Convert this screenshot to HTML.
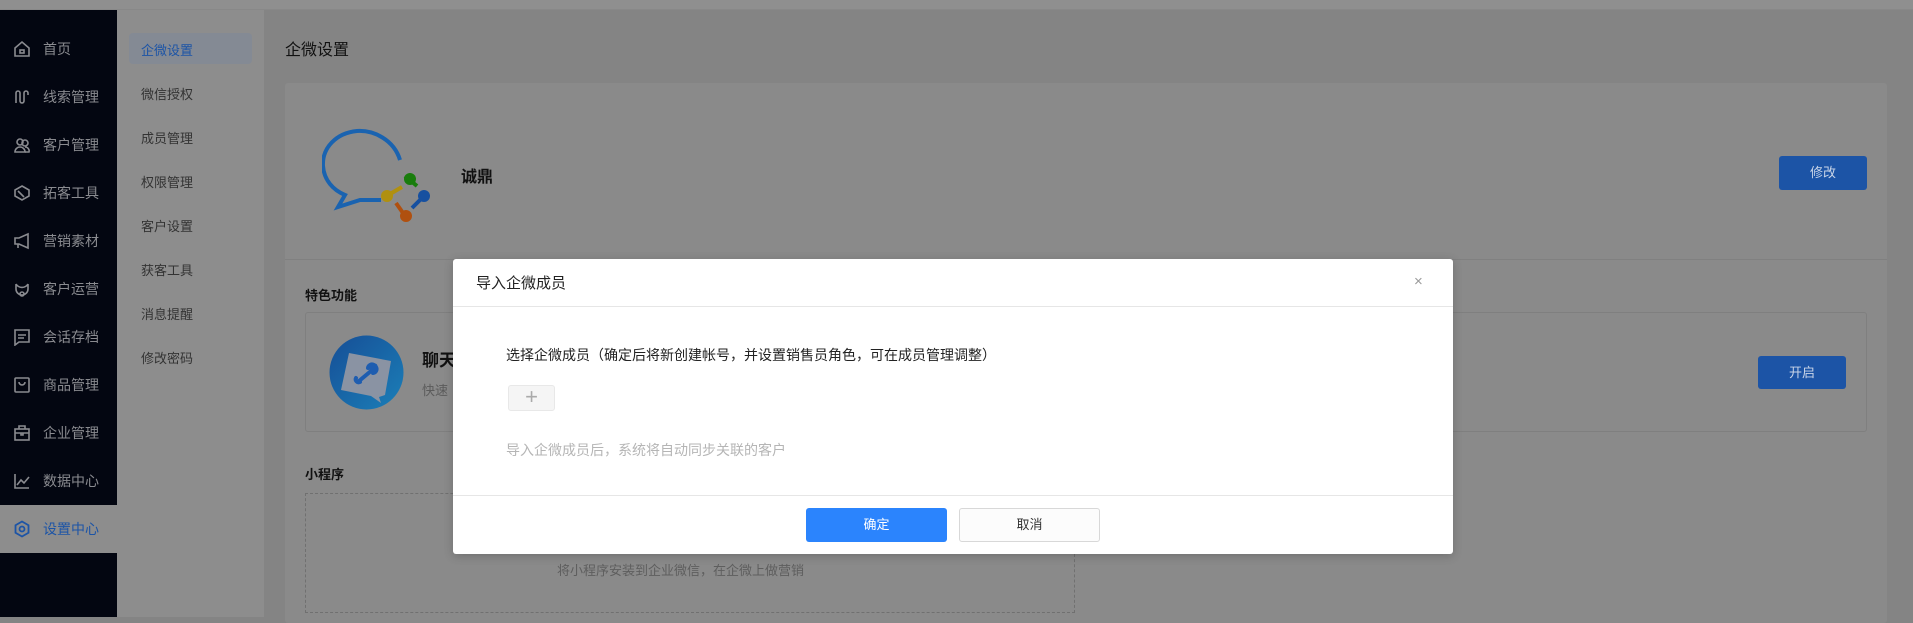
<!DOCTYPE html>
<html><head><meta charset="utf-8"><style>
*{margin:0;padding:0;box-sizing:border-box}
body{width:1913px;height:617px;overflow:hidden;background:#848484;font-family:"Liberation Sans","Noto Sans CJK SC",sans-serif;position:relative}
.a{position:absolute;white-space:nowrap}
.top{left:0;top:0;width:1913px;height:10px;background:#8f8f8f;border-bottom:1px solid #888}
.side{left:0;top:10px;width:117px;height:607px;background:#030611}
.nav{left:0;width:117px;height:48px;color:#8a8b90;font-size:14px;line-height:48px;padding-left:43px}
.nav svg{position:absolute;left:13px;top:15px}
.sub{left:117px;top:10px;width:147px;height:607px;background:#8d8d8d}
.si{left:141px;font-size:13px;color:#333}
.card{background:#8a8a8a;border-radius:3px}
.btn{background:#1c54a6;color:#c9d5e8;font-size:13px;text-align:center;border-radius:3px}
</style></head><body>
<div class="a top"></div>
<div class="a side"></div>
<div class="a" style="left:0;top:505px;width:117px;height:48px;background:#8d8d8d"></div>
<div class="a nav" style="top:25px"><svg width="18" height="18" viewBox="0 0 18 18" fill="none" stroke="#8a8b90" stroke-width="1.6"><path d="M2 8L9 2l7 6v8H2z"/><rect x="7" y="10" width="4" height="3"/></svg>首页</div>
<div class="a nav" style="top:73px"><svg width="18" height="18" viewBox="0 0 18 18" fill="none" stroke="#8a8b90" stroke-width="1.6"><path d="M3 15V5a2 2 0 014 0v8a2 2 0 004 0V5a2 2 0 014 0v2"/></svg>线索管理</div>
<div class="a nav" style="top:121px"><svg width="18" height="18" viewBox="0 0 18 18" fill="none" stroke="#8a8b90" stroke-width="1.6"><circle cx="7" cy="6" r="3"/><path d="M2 16a5 5 0 0110 0z"/><circle cx="12" cy="7" r="3"/><path d="M12 16h4a4 4 0 00-4-5"/></svg>客户管理</div>
<div class="a nav" style="top:169px"><svg width="18" height="18" viewBox="0 0 18 18" fill="none" stroke="#8a8b90" stroke-width="1.6"><path d="M9 2l7 4v6l-7 4-7-4V6z"/><path d="M5 7l6 6"/></svg>拓客工具</div>
<div class="a nav" style="top:217px"><svg width="18" height="18" viewBox="0 0 18 18" fill="none" stroke="#8a8b90" stroke-width="1.6"><path d="M2 6h4l9-4v14l-9-4H2z"/><path d="M5 12v4"/></svg>营销素材</div>
<div class="a nav" style="top:265px"><svg width="18" height="18" viewBox="0 0 18 18" fill="none" stroke="#8a8b90" stroke-width="1.6"><path d="M3 4a7 7 0 0012 0M3 4v5a6 6 0 0012 0V4"/><circle cx="9" cy="14" r="2"/></svg>客户运营</div>
<div class="a nav" style="top:313px"><svg width="18" height="18" viewBox="0 0 18 18" fill="none" stroke="#8a8b90" stroke-width="1.6"><path d="M2 2h14v12H6l-4 3z"/><path d="M5 7h8M5 10h6"/></svg>会话存档</div>
<div class="a nav" style="top:361px"><svg width="18" height="18" viewBox="0 0 18 18" fill="none" stroke="#8a8b90" stroke-width="1.6"><rect x="2" y="2" width="14" height="14" rx="1"/><path d="M6 6a3 3 0 006 0"/></svg>商品管理</div>
<div class="a nav" style="top:409px"><svg width="18" height="18" viewBox="0 0 18 18" fill="none" stroke="#8a8b90" stroke-width="1.6"><rect x="2" y="5" width="14" height="11"/><path d="M6 5V2h6v3M2 9h14M8 9v2h2V9"/></svg>企业管理</div>
<div class="a nav" style="top:457px"><svg width="18" height="18" viewBox="0 0 18 18" fill="none" stroke="#8a8b90" stroke-width="1.6"><path d="M2 2v14h14"/><path d="M4 13l4-5 3 3 5-6"/></svg>数据中心</div>
<div class="a nav" style="top:505px;color:#1c54a6"><svg width="18" height="18" viewBox="0 0 18 18" fill="none" stroke="#1c54a6" stroke-width="1.8"><path d="M9 1.5l6.5 3.75v7.5L9 16.5l-6.5-3.75v-7.5z"/><circle cx="9" cy="9" r="2.5"/></svg>设置中心</div>
<div class="a sub"></div>
<div class="a" style="left:129px;top:33px;width:123px;height:31px;background:#848a94;border-radius:4px"></div>
<div class="a si" style="top:40px;color:#1c54a6">企微设置</div>
<div class="a si" style="top:84px">微信授权</div>
<div class="a si" style="top:128px">成员管理</div>
<div class="a si" style="top:172px">权限管理</div>
<div class="a si" style="top:216px">客户设置</div>
<div class="a si" style="top:260px">获客工具</div>
<div class="a si" style="top:304px">消息提醒</div>
<div class="a si" style="top:348px">修改密码</div>
<div class="a" style="left:285px;top:36px;font-size:16px;color:#111">企微设置</div>
<div class="a card" style="left:285px;top:83px;width:1602px;height:540px"></div>
<div class="a" style="left:285px;top:259px;width:1602px;height:1px;background:#808080"></div>
<svg class="a" style="left:322px;top:128px" width="112" height="100" viewBox="0 0 112 100"><path d="M78 32C72 12 52 2 35 3 14 5 0 20 1 38c1 14 10 24 22 29l-7 12 22-7h21" fill="none" stroke="#1a63b0" stroke-width="4"/><circle cx="88" cy="51" r="6" fill="#197d0c"/><path d="M83 48l12 10" stroke="#197d0c" stroke-width="4"/><circle cx="65" cy="68" r="6" fill="#b09010"/><path d="M68 66l12-7" stroke="#b09010" stroke-width="4"/><circle cx="102" cy="68" r="6" fill="#1650a0"/><path d="M100 70l-10 10" stroke="#1650a0" stroke-width="4"/><circle cx="84" cy="88" r="6" fill="#b0500f"/><path d="M81 85l-7-10" stroke="#b0500f" stroke-width="4"/></svg>
<div class="a" style="left:461px;top:163px;font-size:16px;font-weight:bold;color:#111">诚鼎</div>
<div class="a btn" style="left:1779px;top:156px;width:88px;height:34px;line-height:34px">修改</div>
<div class="a" style="left:305px;top:285px;font-size:13px;font-weight:bold;color:#111">特色功能</div>
<div class="a" style="left:305px;top:312px;width:1562px;height:120px;border:1px solid #7f7f7f;border-radius:3px"></div>
<svg class="a" style="left:329px;top:335px" width="75" height="75" viewBox="0 0 75 75"><defs><linearGradient id="g" x1="0" y1="0" x2="1" y2="1"><stop offset="0" stop-color="#164e96"/><stop offset="1" stop-color="#1b7fb8"/></linearGradient></defs><circle cx="37.5" cy="37.5" r="37" fill="url(#g)"/><path d="M20 18l42 8-6 34-6 2 2 6-10-7-30-6z" fill="#8a93a3"/><path d="M30 46l12-10m-3-3a4 4 0 016 -3l-3 3 2 2 3-3a4 4 0 01-3 6m-13 9a3 3 0 01-4-4" stroke="#1e5db0" stroke-width="4" fill="none" stroke-linecap="round"/></svg>
<div class="a" style="left:422px;top:346px;font-size:17px;font-weight:bold;color:#111">聊天</div>
<div class="a" style="left:422px;top:380px;font-size:13px;color:#5b5b5b">快速</div>
<div class="a btn" style="left:1758px;top:356px;width:88px;height:33px;line-height:33px">开启</div>
<div class="a" style="left:305px;top:464px;font-size:13px;font-weight:bold;color:#111">小程序</div>
<div class="a" style="left:305px;top:493px;width:770px;height:120px;border:1px dashed #707070"></div>
<div class="a" style="left:557px;top:560px;font-size:13px;color:#5e5e5e">将小程序安装到企业微信，在企微上做营销</div>
<div class="a" style="left:453px;top:259px;width:1000px;height:295px;background:#fff;border-radius:3px;box-shadow:0 2px 10px rgba(0,0,0,.2)"></div>
<div class="a" style="left:453px;top:306px;width:1000px;height:1px;background:#e6e6e6"></div>
<div class="a" style="left:453px;top:495px;width:1000px;height:1px;background:#e6e6e6"></div>
<div class="a" style="left:476px;top:272px;font-size:15px;color:#222">导入企微成员</div>
<div class="a" style="left:1414px;top:273px;font-size:15px;color:#999">×</div>
<div class="a" style="left:506px;top:345px;font-size:14px;color:#222">选择企微成员（确定后将新创建帐号，并设置销售员角色，可在成员管理调整）</div>
<div class="a" style="left:508px;top:385px;width:47px;height:26px;background:#f5f5f5;border:1px solid #e8e8e8;border-radius:3px;color:#aaa;font-size:22px;line-height:22px;text-align:center;font-weight:200">+</div>
<div class="a" style="left:506px;top:440px;font-size:14px;color:#b5b5b5">导入企微成员后，系统将自动同步关联的客户</div>
<div class="a" style="left:806px;top:508px;width:141px;height:34px;background:#2b84fd;border-radius:3px;color:#fff;font-size:13px;text-align:center;line-height:34px">确定</div>
<div class="a" style="left:959px;top:508px;width:141px;height:34px;background:#fcfcfc;border:1px solid #d8d8d8;border-radius:3px;color:#333;font-size:13px;text-align:center;line-height:32px">取消</div>
</body></html>
